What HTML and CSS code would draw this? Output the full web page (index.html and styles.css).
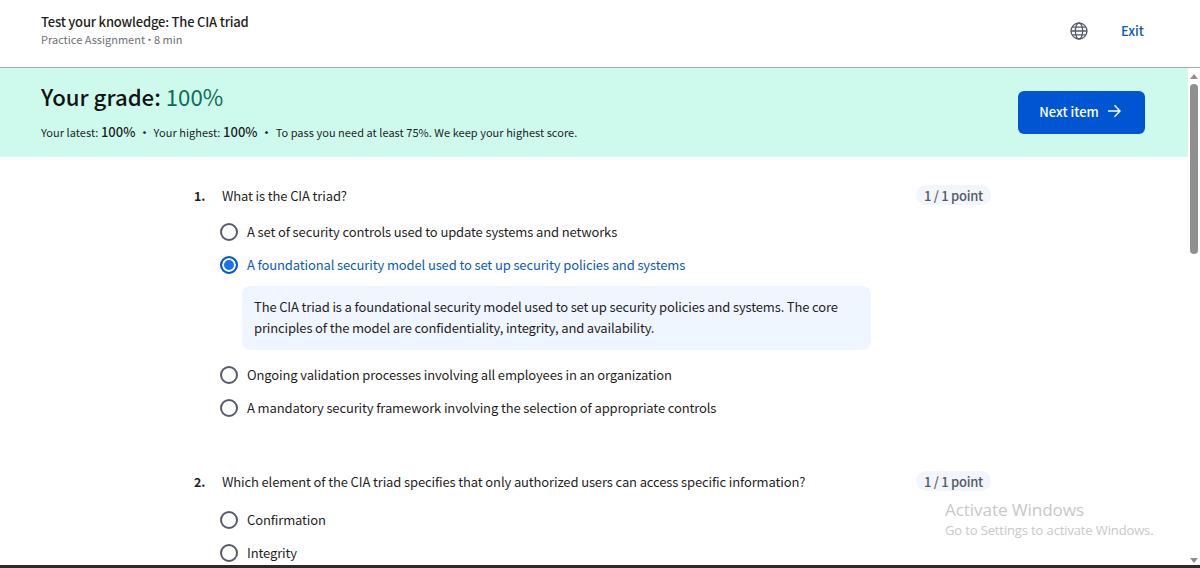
FILE: index.html
```html
<!DOCTYPE html>
<html>
<head>
    <title>Test your knowledge: The CIA triad</title>
    <link rel="stylesheet" href="styles.css">
</head>
<body>
    <header class="top-bar">
        <div class="top-title">
            <h1>Test your knowledge: The CIA triad</h1>
            <p>Practice Assignment<span class="sep">•</span>8 min</p>
        </div>
        <svg class="globe" width="18" height="18" viewBox="0 0 18 18" fill="none" stroke="#545b6b" stroke-width="1.3">
            <circle cx="9" cy="9" r="8"/>
            <ellipse cx="9" cy="9" rx="3.6" ry="8"/>
            <path d="M1 9h16M2 5.2h14M2 12.8h14"/>
        </svg>
        <a class="exit-link">Exit</a>
    </header>

    <div class="page">
        <main class="content">
            <section class="grade-banner">
                <div>
                    <h2>Your grade: <span class="grade-value">100%</span></h2>
                    <p class="grade-info">
                        Your latest: <b>100%</b><span class="dot">•</span>Your highest: <b>100%</b><span class="dot">•</span>To pass you need at least 75%. We keep your highest score.
                    </p>
                </div>
                <button class="next-btn">Next item
                    <svg width="14" height="14" viewBox="0 0 14 14" fill="none" stroke="#fff" stroke-width="1.4">
                        <path d="M1 7h12M7.500 1.200 13 7l-5.500 5.800"/>
                    </svg>
                </button>
            </section>

            <section class="question first">
                <div class="question-head">
                    <span class="num">1.</span>
                    <span class="q-text">What is the CIA triad?</span>
                    <span class="points">1 / 1 point</span>
                </div>
                <div class="option"><span class="radio"></span>A set of security controls used to update systems and networks</div>
                <div class="option selected"><span class="radio"></span>A foundational security model used to set up security policies and systems</div>
                <div class="feedback">The CIA triad is a foundational security model used to set up security policies and systems. The core principles of the model are confidentiality, integrity, and availability.</div>
                <div class="option"><span class="radio"></span>Ongoing validation processes involving all employees in an organization</div>
                <div class="option"><span class="radio"></span>A mandatory security framework involving the selection of appropriate controls</div>
            </section>

            <section class="question second">
                <div class="question-head">
                    <span class="num">2.</span>
                    <span class="q-text">Which element of the CIA triad specifies that only authorized users can access specific information?</span>
                    <span class="points">1 / 1 point</span>
                </div>
                <div class="option"><span class="radio"></span>Confirmation</div>
                <div class="option"><span class="radio"></span>Integrity</div>
            </section>
        </main>

        <div class="scrollbar">
            <span class="arrow-up"></span>
            <span class="thumb"></span>
            <span class="arrow-down"></span>
        </div>
    </div>

    <div class="watermark">
        <div class="wm-title">Activate Windows</div>
        <div class="wm-sub">Go to Settings to activate Windows.</div>
    </div>
</body>
</html>
```

FILE: styles.css
```css
* {
    box-sizing: border-box;
}
html, body {
    height: 100%;
}
body {
    margin: 0;
    display: flex;
    flex-direction: column;
    overflow: hidden;
    background-color: white;
    color: #1f1f1f;
    font-family: "Noto Sans CJK SC", "Noto Sans", sans-serif;
    letter-spacing: -0.13px;
    border-bottom: 3px solid #2b2b2b;
}
h1, h2, p {
    margin: 0;
}
.top-bar {
    flex: none;
    height: 68px;
    display: flex;
    align-items: center;
    padding: 0 56px 6px 41px;
    border-bottom: 1px solid #a5abaf;
}
.top-title {
    flex: 1;
}
.top-title h1 {
    font-size: 13px;
    font-weight: 500;
    letter-spacing: -0.2px;
    line-height: 18px;
    color: #1f1f1f;
}
.top-title p {
    font-size: 11px;
    letter-spacing: 0;
    line-height: 17px;
    color: #6d7278;
}
.sep {
    margin: 0 -1px;
}
.globe {
    margin-right: 33px;
}
.exit-link {
    font-size: 13px;
    font-weight: 500;
    letter-spacing: 0;
    color: #0a5cb8;
}
.page {
    flex: 1;
    min-height: 0;
    display: flex;
}
.content {
    flex: 1;
    min-width: 0;
    overflow: hidden;
}
.scrollbar {
    flex: none;
    width: 12px;
    display: flex;
    flex-direction: column;
    align-items: center;
    padding: 6px 0 2px;
    background-color: white;
}
.thumb {
    width: 8px;
    height: 170px;
    margin-top: 5px;
    border-radius: 4px;
    background-color: #8f8f8f;
}
.arrow-up, .arrow-down {
    width: 0;
    height: 0;
    border-left: 4px solid transparent;
    border-right: 4px solid transparent;
}
.arrow-up {
    border-bottom: 5px solid #8f8f8f;
}
.arrow-down {
    margin-top: auto;
    border-top: 5px solid #8f8f8f;
}
.grade-banner {
    height: 89px;
    display: flex;
    align-items: center;
    justify-content: space-between;
    padding: 0 43px 0 41px;
    background-color: #cefaee;
}
.grade-banner h2 {
    margin-top: -3px;
    font-size: 22.200px;
    font-weight: 500;
    letter-spacing: 0;
    line-height: 30px;
    color: #141414;
}
.grade-value {
    font-weight: 400;
    color: #0b6e55;
}
.grade-info {
    margin-top: 12px;
    font-size: 11px;
    letter-spacing: 0.04px;
    line-height: 18px;
}
.grade-info b {
    font-size: 13px;
    font-weight: 500;
}
.dot {
    margin: 0 3.500px;
    font-weight: 700;
}
.next-btn {
    width: 127px;
    height: 43px;
    display: flex;
    align-items: center;
    justify-content: center;
    gap: 8px;
    padding: 0 3px 3px 0;
    border: none;
    border-radius: 6px;
    background-color: #0056d2;
    color: white;
    font-family: inherit;
    font-size: 13px;
    font-weight: 500;
}
.question {
    width: 800px;
    margin-left: 194px;
}
.first {
    padding-top: 27px;
}
.second {
    margin-top: 46px;
}
.question-head {
    display: flex;
    align-items: center;
    height: 22px;
    font-size: 13px;
}
.num {
    width: 28px;
    font-weight: 700;
    font-size: 12.500px;
}
.q-text {
    flex: 1;
}
.points {
    margin-right: 3px;
    padding: 0 8px;
    height: 20px;
    line-height: 21px;
    border-radius: 10px;
    background-color: #f2f5fa;
    color: #535b6b;
    font-size: 13px;
    font-weight: 500;
    letter-spacing: -0.25px;
}
.option {
    display: flex;
    align-items: center;
    height: 33px;
    padding-left: 26px;
    font-size: 13px;
}
.question-head + .option {
    margin-top: 9px;
}
.second .question-head + .option {
    margin-top: 11px;
}
.radio {
    flex: none;
    width: 18px;
    height: 18px;
    margin-right: 9px;
    border: 2px solid #545b6b;
    border-radius: 50%;
    background-color: white;
}
.option.selected {
    color: #0a5cb8;
}
.selected .radio {
    border-color: #0056d2;
    background-color: #1a73e8;
    box-shadow: inset 0 0 0 2px white;
}
.feedback {
    width: 629px;
    height: 64px;
    margin: 5px 0 8px 48px;
    padding: 10px 12px;
    border-radius: 8px;
    background-color: #f0f6ff;
    font-size: 13px;
    letter-spacing: -0.15px;
    line-height: 21px;
}
.watermark {
    position: absolute;
    left: 945px;
    top: 499px;
    color: #c8c8c8;
    font-family: "Open Sans", sans-serif;
}
.wm-title {
    font-size: 17.200px;
    line-height: 21px;
}
.wm-sub {
    margin-top: 1px;
    font-size: 13px;
    line-height: 18px;
}
```
